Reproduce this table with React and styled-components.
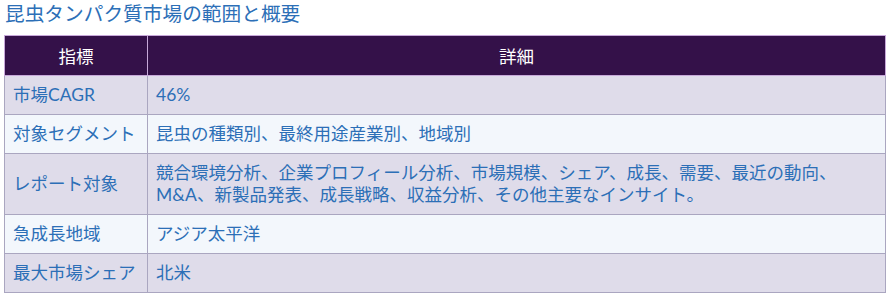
import React from 'react';
import styled, { createGlobalStyle } from 'styled-components';

const Global = createGlobalStyle`
  body {
    margin: 0;
    background: #ffffff;
    font-family: Lato, "Noto Sans CJK JP", sans-serif;
  }
`;

const Wrap = styled.div`
  padding: 0 9px 0 4px;
`;

const Title = styled.h3`
  margin: 0;
  padding: 2px 0 0 1px;
  height: 35px;
  box-sizing: border-box;
  font-size: 19.7px;
  font-weight: 400;
  line-height: 24px;
  color: #2c6fb7;
`;

const Table = styled.table`
  width: 100%;
  border-collapse: collapse;
  color: #2c6fb7;
`;

const Th = styled.th`
  background: #341149;
  color: #ffffff;
  font-size: 17.5px;
  font-weight: 400;
  height: 40px;
  padding: 0 8px;
  border: 1px solid #c7a8d9;
  box-sizing: border-box;
  width: ${p => p.$w || 'auto'};
`;

const Tr = styled.tr`
  background: ${p => (p.$alt ? '#f3f7fc' : '#dfdcea')};
`;

const Td = styled.td`
  border: 1px solid #aaa6c0;
  padding: 8px;
  font-size: 17.5px;
  line-height: 22px;
  color: #2c6fb7;
  vertical-align: middle;
  white-space: ${p => (p.$nowrap ? 'nowrap' : 'normal')};
`;

const rows = [
  ['市場CAGR', '46%'],
  ['対象セグメント', '昆虫の種類別、最終用途産業別、地域別'],
  ['レポート対象', '競合環境分析、企業プロフィール分析、市場規模、シェア、成長、需要、最近の動向、M&A、新製品発表、成長戦略、収益分析、その他主要なインサイト。'],
  ['急成長地域', 'アジア太平洋'],
  ['最大市場シェア', '北米'],
];

export default function App() {
  return (
    <Wrap>
      <Global />
      <Title>昆虫タンパク質市場の範囲と概要</Title>
      <Table>
        <thead>
          <tr>
            <Th $w="143px">指標</Th>
            <Th>詳細</Th>
          </tr>
        </thead>
        <tbody>
          {rows.map((r, i) => (
            <Tr key={r[0]} $alt={i % 2 === 1}>
              <Td $nowrap>{r[0]}</Td>
              <Td>{r[1]}</Td>
            </Tr>
          ))}
        </tbody>
      </Table>
    </Wrap>
  );
}
